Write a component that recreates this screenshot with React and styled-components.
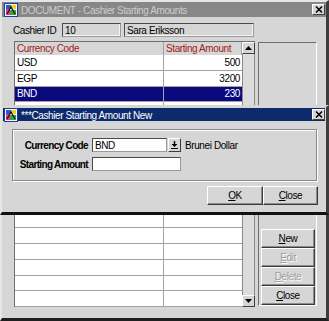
import React from 'react';
import styled, { createGlobalStyle } from 'styled-components';

const GlobalStyle = createGlobalStyle`
  html, body {
    margin: 0;
    padding: 0;
    background: #d6d6d6;
  }
  body {
    width: 329px;
    height: 321px;
    overflow: hidden;
    font-family: "Liberation Sans", Arial, sans-serif;
    font-size: 10px;
    letter-spacing: -0.4px;
    color: #000;
  }
`;

const rows = [
  { code: 'USD', amount: '500' },
  { code: 'EGP', amount: '3200' },
  { code: 'BND', amount: '230', selected: true },
];

// the window icon in both title bars
const AppIcon = () => (
  <svg width="14" height="14" viewBox="0 0 14 14">
    <rect x="0.5" y="0.5" width="13" height="13" fill="#f4f4f4" stroke="#1c3c9c" />
    <rect x="2" y="2" width="5" height="4" fill="#2a56d0" />
    <rect x="7" y="2" width="5" height="4" fill="#f0d020" />
    <rect x="2" y="6" width="4" height="6" fill="#e03a8a" />
    <rect x="6" y="7" width="6" height="5" fill="#3aa040" />
    <path d="M3 11 L7 4 L11 11" fill="none" stroke="#111" strokeWidth="1.2" />
  </svg>
);

const CloseGlyph = () => (
  <svg width="8" height="7" viewBox="0 0 8 7">
    <path d="M1 0.5 L7 6.5 M7 0.5 L1 6.5" stroke="#000" strokeWidth="1.5" />
  </svg>
);

const DropGlyph = () => (
  <svg width="7" height="8" viewBox="0 0 7 8">
    <path d="M3.5 0 V4" stroke="#000" strokeWidth="1.4" />
    <path d="M0.5 3 H6.5 L3.5 6 Z" fill="#000" />
    <path d="M0 7.5 H7" stroke="#000" strokeWidth="1" />
  </svg>
);

const Arrow = ({ down }) => (
  <svg width="7" height="4" viewBox="0 0 7 4">
    <path d={down ? 'M0 0 H7 L3.5 4 Z' : 'M0 4 H7 L3.5 0 Z'} fill="#000" />
  </svg>
);

const App = () => (
  <>
    <GlobalStyle />
    <Window>
      <TitleBar>
        <AppIcon />
        <TitleText>DOCUMENT - Cashier Starting Amounts</TitleText>
        <CloseBox><CloseGlyph /></CloseBox>
      </TitleBar>

      <Body>
        <CashierRow>
          <Label>Cashier ID</Label>
          <Field $w={59} $disabled>10</Field>
          <Field $w={130} $disabled>Sara Eriksson</Field>
        </CashierRow>

        <GridArea>
          <Table>
            <HeadRow>
              <HeadCell>Currency Code</HeadCell>
              <HeadCell>Starting Amount</HeadCell>
            </HeadRow>
            {Array.from({ length: 16 }).map((_, i) => {
              const r = rows[i] || {};
              return (
                <Row key={i} $selected={r.selected}>
                  <CodeCell>{r.code}</CodeCell>
                  <AmountCell>{r.amount}</AmountCell>
                </Row>
              );
            })}
          </Table>

          <ScrollBar>
            <ScrollButton><Arrow /></ScrollButton>
            <Track />
            <ScrollButton><Arrow down /></ScrollButton>
          </ScrollBar>

          <SidePanel>
            <Button><u>N</u>ew</Button>
            <Button disabled><u>E</u>dit</Button>
            <Button disabled><u>D</u>elete</Button>
            <Button><u>C</u>lose</Button>
          </SidePanel>
        </GridArea>
      </Body>

      <Dialog>
        <DialogTitle>
          <AppIcon />
          <TitleText>***Cashier Starting Amount New</TitleText>
          <CloseBox><CloseGlyph /></CloseBox>
        </DialogTitle>
        <DialogBody>
          <GroupBox>
            <FormRow>
              <FormLabel>Currency Code</FormLabel>
              <Field $w={75} $white>BND</Field>
              <DropButton><DropGlyph /></DropButton>
              <Hint>Brunei Dollar</Hint>
            </FormRow>
            <FormRow>
              <FormLabel>Starting Amount</FormLabel>
              <Field $w={89} $white />
            </FormRow>
          </GroupBox>
          <ButtonRow>
            <DialogButton $w={56}><u>O</u>K</DialogButton>
            <DialogButton $w={55}><u>C</u>lose</DialogButton>
          </ButtonRow>
        </DialogBody>
      </Dialog>
    </Window>
  </>
);

// Styled Components
const Window = styled.div`
  position: relative;
  width: 329px;
  height: 321px;
  box-sizing: border-box;
  background: #d6d6d6;
  border-style: solid;
  border-width: 2px 3px 3px 2px;
  border-color: #e6e6e6 #3c3c3c #1e1e1e #e6e6e6;
  display: flex;
  flex-direction: column;
`;

const TitleBar = styled.div`
  height: 15px;
  flex-shrink: 0;
  display: flex;
  align-items: center;
  padding: 0 1px 0 2px;
  gap: 3px;
  background: #878787;
  color: #cdcdcd;
`;

const TitleText = styled.span`
  flex: 1;
  font-size: 10px;
  white-space: nowrap;
  padding-top: 1px;
`;

const CloseBox = styled.div`
  width: 11px;
  height: 9px;
  display: flex;
  align-items: center;
  justify-content: center;
  background: #d6d6d6;
  border-style: solid;
  border-width: 1px;
  border-color: #fff #404040 #404040 #fff;
`;

const Body = styled.div`
  flex: 1;
  display: flex;
  flex-direction: column;
  padding: 6px 9px 11px 12px;
`;

const CashierRow = styled.div`
  display: flex;
  align-items: center;
  height: 14px;
  gap: 3px;
`;

const Label = styled.span`
  width: 44px;
  margin-left: -1px;
  margin-right: 2px;
  white-space: nowrap;
`;

const Field = styled.div`
  width: ${p => p.$w}px;
  height: 14px;
  box-sizing: border-box;
  padding: 0 2px;
  display: flex;
  align-items: center;
  white-space: nowrap;
  overflow: hidden;
  background: ${p => (p.$white ? '#fff' : '#d6d6d6')};
  border: 1px solid;
  border-color: #4a4a4a #9a9a9a #9a9a9a #4a4a4a;
  ${p => p.$disabled && 'box-shadow: inset -1px -1px #f4f4f4;'}
`;

const GridArea = styled.div`
  display: flex;
  margin-top: 4px;
  height: 266px;
`;

const Table = styled.div`
  width: 228px;
  box-sizing: border-box;
  border-top: 1px solid #6e6e6e;
  border-left: 1px solid #6e6e6e;
  overflow: hidden;
`;

const HeadRow = styled.div`
  display: grid;
  grid-template-columns: 149px 1fr;
  height: 13px;
  color: #a31a1a;
`;

const HeadCell = styled.div`
  padding-left: 2px;
  display: flex;
  align-items: center;
  border-right: 1px solid #a4a4a4;
  white-space: nowrap;
`;

const Row = styled.div`
  display: grid;
  grid-template-columns: 149px 1fr;
  height: 15.75px;
  box-sizing: border-box;
  border-bottom: 1px solid #a2a2a2;
  background: ${p => (p.$selected ? '#0a0a7e' : '#fff')};
  color: ${p => (p.$selected ? '#fff' : '#000')};
`;

const CodeCell = styled.div`
  padding-left: 2px;
  display: flex;
  align-items: center;
  border-right: 1px solid #a4a4a4;
`;

const AmountCell = styled.div`
  padding-right: 2px;
  display: flex;
  align-items: center;
  justify-content: flex-end;
`;

const ScrollBar = styled.div`
  width: 13px;
  display: flex;
  flex-direction: column;
  border-top: 1px solid #6e6e6e;
`;

const ScrollButton = styled.div`
  height: 10px;
  display: flex;
  align-items: center;
  justify-content: center;
  background: #d6d6d6;
  border-style: solid;
  border-width: 1px;
  border-color: #fff #404040 #404040 #fff;
`;

const Track = styled.div`
  flex: 1;
  background: #dcdcdc;
  border-left: 1px solid #8a8a8a;
  border-right: 1px solid #8a8a8a;
`;

const SidePanel = styled.div`
  width: 59px;
  height: 264px;
  margin: 1px 0 0 3px;
  box-sizing: border-box;
  padding: 0 1px 0 2px;
  display: flex;
  flex-direction: column;
  justify-content: flex-end;
  border: 1px solid;
  border-color: #6e6e6e #fff #fff #6e6e6e;
`;

const Button = styled.div`
  height: 19px;
  box-sizing: border-box;
  display: flex;
  align-items: center;
  justify-content: center;
  background: #d6d6d6;
  border-style: solid;
  border-width: 1px;
  border-color: #fff #3a3a3a #3a3a3a #fff;
  box-shadow: inset -1px -1px #8c8c8c;
  color: ${p => (p.disabled ? '#9c9c9c' : '#000')};
  text-shadow: ${p => (p.disabled ? '1px 1px #fff' : 'none')};
`;

const Dialog = styled.div`
  position: absolute;
  top: 103px;
  left: -2px;
  width: 329px;
  height: 110px;
  box-sizing: border-box;
  background: #d6d6d6;
  border-style: solid;
  border-width: 2px 3px 3px 2px;
  border-color: #d6d6d6 #3c3c3c #111 #e6e6e6;
  display: flex;
  flex-direction: column;
`;

const DialogTitle = styled.div`
  height: 13px;
  margin: 1px 1px 0 1px;
  display: flex;
  align-items: center;
  gap: 3px;
  padding: 0 0 0 1px;
  background: #0d2a6c;
  color: #fff;
`;

const DialogBody = styled.div`
  flex: 1;
  display: flex;
  flex-direction: column;
  padding: 8px 8px 0 10px;
`;

const GroupBox = styled.div`
  height: 52px;
  margin-right: 1px;
  box-sizing: border-box;
  padding: 8px 0 0 0;
  display: flex;
  flex-direction: column;
  gap: 5px;
  border: 1px solid #8a8a8a;
  box-shadow: inset 1px 1px #fff, 1px 1px #fff;
`;

const FormRow = styled.div`
  display: flex;
  align-items: center;
  height: 14px;
`;

const FormLabel = styled.span`
  width: 75px;
  margin-right: 4px;
  text-align: right;
  font-weight: bold;
  font-size: 10px;
  letter-spacing: -0.65px;
  white-space: nowrap;
`;

const DropButton = styled.div`
  width: 13px;
  height: 14px;
  box-sizing: border-box;
  margin-left: 1px;
  display: flex;
  align-items: center;
  justify-content: center;
  background: #d6d6d6;
  border-style: solid;
  border-width: 1px;
  border-color: #fff #3a3a3a #3a3a3a #fff;
`;

const Hint = styled.span`
  margin-left: 4px;
  white-space: nowrap;
`;

const ButtonRow = styled.div`
  display: flex;
  justify-content: flex-end;
  margin-top: 5px;
`;

const DialogButton = styled(Button)`
  width: ${p => p.$w}px;
`;

export default App;
